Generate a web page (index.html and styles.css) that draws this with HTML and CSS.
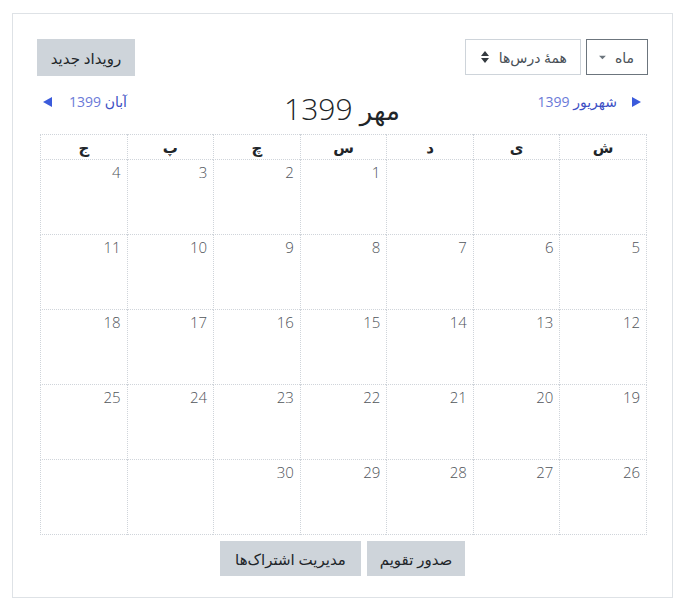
FILE: index.html
```html
<!DOCTYPE html>
<html lang="fa" dir="rtl">
<head>
<meta charset="utf-8">
<title>تقویم</title>
<link rel="stylesheet" href="styles.css">
</head>
<body>
<div class="card">
  <div class="toolbar">
    <div class="selects">
      <div class="select select-focus">
        <span>ماه</span>
        <svg class="caret" width="10" height="5" viewBox="0 0 10 5"><path d="M0 0h10L5 5z" fill="#6c757d"/></svg>
      </div>
      <div class="select">
        <span>همهٔ درس‌ها</span>
        <svg class="updown" width="8" height="12" viewBox="0 0 8 12"><path d="M4 0L8 5H0z M4 12L0 7h8z" fill="#343a40"/></svg>
      </div>
    </div>
    <button class="btn">رویداد جدید</button>
  </div>

  <div class="nav">
    <a class="nav-link nav-prev">
      <svg class="tri" width="9" height="10" viewBox="0 0 9 10"><path d="M9 5L0 0v10z" fill="#3b5bdb"/></svg>
      <span>شهریور <span class="yr">1399</span></span>
    </a>
    <h2 class="title"><span class="mon">مهر</span> <span class="num">1399</span></h2>
    <a class="nav-link nav-next">
      <span>آبان <span class="yr">1399</span></span>
      <svg class="tri" width="9" height="10" viewBox="0 0 9 10"><path d="M0 5L9 0v10z" fill="#3b5bdb"/></svg>
    </a>
  </div>

  <table class="cal">
    <thead>
      <tr><th>ش</th><th>ی</th><th>د</th><th>س</th><th>چ</th><th>پ</th><th>ج</th></tr>
    </thead>
    <tbody>
      <tr><td></td><td></td><td></td><td>1</td><td>2</td><td>3</td><td>4</td></tr>
      <tr><td>5</td><td>6</td><td>7</td><td>8</td><td>9</td><td>10</td><td>11</td></tr>
      <tr><td>12</td><td>13</td><td>14</td><td>15</td><td>16</td><td>17</td><td>18</td></tr>
      <tr><td>19</td><td>20</td><td>21</td><td>22</td><td>23</td><td>24</td><td>25</td></tr>
      <tr><td>26</td><td>27</td><td>28</td><td>29</td><td>30</td><td></td><td></td></tr>
    </tbody>
  </table>

  <div class="footer">
    <button class="btn btn-export">صدور تقویم</button>
    <button class="btn btn-manage">مدیریت اشتراک‌ها</button>
  </div>
</div>
</body>
</html>
```

FILE: styles.css
```css
* { box-sizing: border-box; }
html, body { margin: 0; padding: 0; background: #fff; }
body {
  font-family: "Open Sans", "DejaVu Sans", sans-serif;
  color: #212529;
  font-size: 14px;
}
.card {
  margin: 13px 11px 0 12px;
  width: 661px;
  height: 585px;
  border: 1px solid #dee2e6;
  padding: 25px 24px 0 24px;
}
.toolbar {
  display: flex;
  justify-content: space-between;
  align-items: flex-start;
  height: 37px;
}
.selects { display: flex; gap: 5px; }
.select {
  height: 36px;
  border: 1px solid #ced4da;
  display: flex;
  align-items: center;
  gap: 9px;
  padding: 0 13px 0 12px;
  font-size: 14px;
  color: #495057;
}
.select-focus { border-color: #6c757d; width: 62px; }
.select:not(.select-focus) { width: 116px; gap: 10px; }
.btn {
  font-family: "Open Sans", "DejaVu Sans", sans-serif;
  background: #ced4da;
  border: none;
  color: #212529;
  font-size: 15px;
  height: 37px;
  padding: 0 10px;
}
.toolbar .btn { width: 98px; }
.nav {
  display: grid;
  grid-template-columns: 1fr auto 1fr;
  align-items: start;
  margin-top: 14px;
  padding: 0 7px 0 6px;
  height: 44px;
}
.nav-link {
  display: flex;
  align-items: center;
  gap: 15px;
  color: #3d4fc4;
  font-size: 14px;
  line-height: 24px;
}
.nav-next { gap: 17px; }
.nav-prev { justify-self: start; }
.nav-next { justify-self: end; }
.nav-link .yr { color: #6b7ad8; }
.title {
  margin: 0;
  font-weight: 400;
  line-height: 38px;
  color: #212529;
  font-size: 27px;
}
.title .mon { font-size: 26px; }
.title .num { font-weight: 300; font-size: 30px; }
.cal {
  width: 607px;
  margin: 0 1px 0 3px;
  border-collapse: collapse;
  table-layout: fixed;
}
.cal th, .cal td {
  border: 1px dotted #cfd4da;
}
.cal th {
  height: 25px;
  font-size: 15px;
  font-weight: 700;
  text-align: center;
  padding: 0;
  color: #212529;
}
.cal td {
  height: 75px;
  vertical-align: top;
  text-align: right;
  padding: 2px 6px;
  font-size: 15px;
  font-weight: 300;
  color: #4f545a;
}
.footer {
  display: flex;
  justify-content: center;
  gap: 6px;
  margin-top: 6px;
}
.footer .btn { height: 35px; }
.btn-export { width: 98px; }
.btn-manage { width: 141px; }
```
